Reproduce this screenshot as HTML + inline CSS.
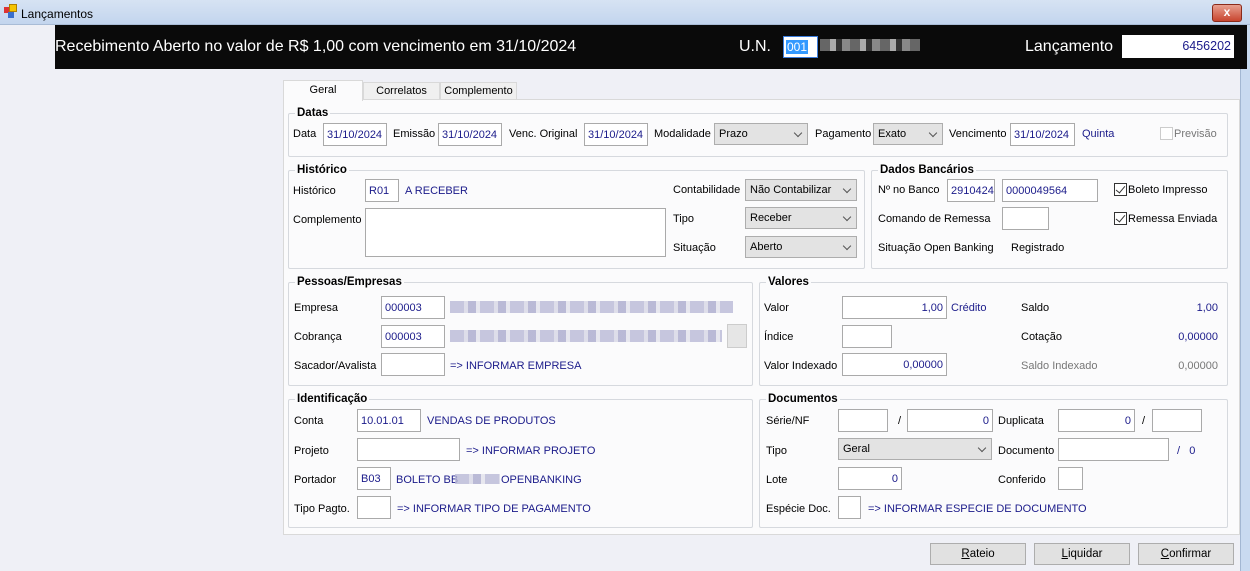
<!DOCTYPE html>
<html><head><meta charset="utf-8"><style>
*{box-sizing:border-box;margin:0;padding:0}
body{width:1250px;height:571px;overflow:hidden;background:#eff0f6;font-family:"Liberation Sans",sans-serif;font-size:11px;color:#000;position:relative}
div,span{position:absolute}
.tb{left:0;top:0;width:1250px;height:25px;background:linear-gradient(#d6e3f3,#c3d5ee);border-bottom:1px solid #a9bcd6}
.ban{left:55px;top:25px;width:1192px;height:44px;background:#0a0a0a;color:#fff;font-size:16px}
.l{white-space:nowrap;line-height:14px}
.b{color:#1b1b8a}
.gr{color:#777}
.i{background:#fff;border:1px solid #aaa;height:23px;color:#1b1b8a;line-height:23px;padding:0 3px;white-space:nowrap}
.r{text-align:right}
.c{background:#e3e3e3;border:1px solid #adadad;height:22px;line-height:21px;padding:0 4px}
.c:after{content:"";position:absolute;right:6px;top:6px;width:5px;height:5px;border-right:1px solid #555;border-bottom:1px solid #555;transform:rotate(45deg)}
.g{border:1px solid #d6d9de;border-radius:2px}
.gt{font-weight:bold;background:#fbfbfc;padding:0 2px;line-height:13px;font-size:11.5px}
.cb{width:13px;height:13px;border:1px solid #333;background:#fff}
.cb:after{content:"";position:absolute;left:3px;top:0px;width:4px;height:8px;border-right:1.5px solid #333;border-bottom:1.5px solid #333;transform:rotate(40deg)}
.btn{background:#e1e1e1;border:1px solid #adadad;height:22px;line-height:21px;text-align:center;font-size:11.5px}
.blur{height:12px;background:repeating-linear-gradient(90deg,#b9b9d6 0 14px,#d6d6e6 14px 18px,#a9a9cc 18px 26px,#e2e2ec 26px 30px);opacity:.8}
</style></head><body>
<div class="tb"><span style="left:4px;top:7px;width:6px;height:6px;background:#d33"></span><span style="left:9px;top:4px;width:8px;height:8px;background:#f5c400;border:1px solid #b08000"></span><span style="left:8px;top:12px;width:6px;height:6px;background:#3a6fcc"></span><span class="l" style="left:21px;top:7px;font-size:12px">Lançamentos</span>
<span style="left:1212px;top:4px;width:30px;height:18px;background:linear-gradient(#e8a090,#c8452f);border:1px solid #8a2a1a;border-radius:3px;color:#fff;font-weight:bold;text-align:center;line-height:15px;font-size:12px">x</span></div>
<div style="left:1240px;top:25px;width:10px;height:546px;background:#c9daf0;border-left:1px solid #a3b7d2"></div>
<div class="ban"><span class="l" style="left:0;top:15px">Recebimento Aberto no valor de R$ 1,00 com vencimento em 31/10/2024</span>
<span class="l" style="left:684px;top:15px">U.N.</span>
<span style="left:728px;top:11px;width:35px;height:22px;background:#fff;border:1px solid #3b7ddd;color:#fff;font-size:12px"><span style="left:2px;top:3px;background:#3399ff;padding:0 1px;line-height:14px">001</span></span>
<span style="left:765px;top:14px;width:100px;height:12px;background:repeating-linear-gradient(90deg,#666 0 10px,#aaa 10px 16px,#333 16px 22px,#888 22px 30px)"></span>
<span class="l" style="left:970px;top:15px">Lançamento</span>
<span style="left:1067px;top:10px;width:112px;height:23px;background:#fff;color:#1b1b8a;font-size:12.5px;text-align:right;line-height:23px;padding-right:3px">6456202</span></div>

<div style="left:283px;top:99px;width:957px;height:436px;background:#fbfbfc;border:1px solid #d9d9d9"></div>
<div style="left:283px;top:80px;width:80px;height:21px;background:#fbfbfc;border:1px solid #d9d9d9;border-bottom:none;text-align:center;line-height:18px">Geral</div>
<div style="left:363px;top:82px;width:77px;height:18px;background:#f0f0f0;border:1px solid #d9d9d9;text-align:center;line-height:17px">Correlatos</div>
<div style="left:440px;top:82px;width:77px;height:18px;background:#f0f0f0;border:1px solid #d9d9d9;text-align:center;line-height:17px">Complemento</div>

<!-- Datas -->
<div class="g" style="left:288px;top:113px;width:940px;height:44px"></div>
<span class="gt" style="left:295px;top:107px">Datas</span>
<span class="l" style="left:293px;top:127px">Data</span><div class="i" style="left:323px;top:123px;width:64px">31/10/2024</div>
<span class="l" style="left:393px;top:127px">Emissão</span><div class="i" style="left:438px;top:123px;width:64px">31/10/2024</div>
<span class="l" style="left:509px;top:127px">Venc. Original</span><div class="i" style="left:584px;top:123px;width:64px">31/10/2024</div>
<span class="l" style="left:654px;top:127px">Modalidade</span><div class="c" style="left:714px;top:123px;width:94px">Prazo</div>
<span class="l" style="left:815px;top:127px">Pagamento</span><div class="c" style="left:873px;top:123px;width:70px">Exato</div>
<span class="l" style="left:949px;top:127px">Vencimento</span><div class="i" style="left:1010px;top:123px;width:65px">31/10/2024</div>
<span class="l b" style="left:1082px;top:127px">Quinta</span>
<span style="left:1160px;top:127px;width:13px;height:13px;border:1px solid #ccc;background:#fff"></span><span class="l gr" style="left:1174px;top:127px">Previsão</span>

<!-- Historico -->
<div class="g" style="left:288px;top:170px;width:577px;height:99px"></div>
<span class="gt" style="left:295px;top:164px">Histórico</span>
<span class="l" style="left:293px;top:184px">Histórico</span><div class="i" style="left:365px;top:179px;width:34px">R01</div><span class="l b" style="left:405px;top:184px">A RECEBER</span>
<span class="l" style="left:293px;top:213px">Complemento</span><div class="i" style="left:365px;top:208px;width:301px;height:49px"></div>
<span class="l" style="left:673px;top:183px">Contabilidade</span><div class="c" style="left:745px;top:179px;width:112px">Não Contabilizar</div>
<span class="l" style="left:673px;top:212px">Tipo</span><div class="c" style="left:745px;top:207px;width:112px">Receber</div>
<span class="l" style="left:673px;top:241px">Situação</span><div class="c" style="left:745px;top:236px;width:112px">Aberto</div>

<!-- Dados Bancarios -->
<div class="g" style="left:871px;top:170px;width:357px;height:99px"></div>
<span class="gt" style="left:878px;top:164px">Dados Bancários</span>
<span class="l" style="left:878px;top:183px">Nº no Banco</span><div class="i" style="left:947px;top:179px;width:48px">2910424</div><div class="i" style="left:1002px;top:179px;width:96px">0000049564</div>
<span class="cb" style="left:1114px;top:183px"></span><span class="l" style="left:1128px;top:183px">Boleto Impresso</span>
<span class="l" style="left:878px;top:212px">Comando de Remessa</span><div class="i" style="left:1002px;top:207px;width:47px"></div>
<span class="cb" style="left:1114px;top:212px"></span><span class="l" style="left:1128px;top:212px">Remessa Enviada</span>
<span class="l" style="left:878px;top:241px">Situação Open Banking</span><span class="l" style="left:1011px;top:241px">Registrado</span>

<!-- Pessoas -->
<div class="g" style="left:288px;top:282px;width:465px;height:104px"></div>
<span class="gt" style="left:295px;top:276px">Pessoas/Empresas</span>
<span class="l" style="left:294px;top:301px">Empresa</span><div class="i" style="left:381px;top:296px;width:64px">000003</div><div class="blur" style="left:450px;top:301px;width:283px"></div>
<span class="l" style="left:294px;top:330px">Cobrança</span><div class="i" style="left:381px;top:325px;width:64px">000003</div><div class="blur" style="left:450px;top:330px;width:272px"></div>
<span style="left:727px;top:324px;width:20px;height:24px;background:#e6e6e6;border:1px solid #ccc"></span>
<span class="l" style="left:294px;top:359px">Sacador/Avalista</span><div class="i" style="left:381px;top:353px;width:64px"></div><span class="l b" style="left:450px;top:359px">=&gt; INFORMAR EMPRESA</span>

<!-- Valores -->
<div class="g" style="left:759px;top:282px;width:469px;height:104px"></div>
<span class="gt" style="left:766px;top:276px">Valores</span>
<span class="l" style="left:764px;top:301px">Valor</span><div class="i r" style="left:842px;top:296px;width:105px">1,00</div><span class="l b" style="left:951px;top:301px">Crédito</span>
<span class="l" style="left:1021px;top:301px">Saldo</span><span class="l b" style="left:1150px;top:301px;width:68px;text-align:right">1,00</span>
<span class="l" style="left:764px;top:330px">Índice</span><div class="i" style="left:842px;top:325px;width:50px"></div>
<span class="l" style="left:1021px;top:330px">Cotação</span><span class="l b" style="left:1150px;top:330px;width:68px;text-align:right">0,00000</span>
<span class="l" style="left:764px;top:359px">Valor Indexado</span><div class="i r" style="left:842px;top:353px;width:105px">0,00000</div>
<span class="l gr" style="left:1021px;top:359px">Saldo Indexado</span><span class="l gr" style="left:1150px;top:359px;width:68px;text-align:right">0,00000</span>

<!-- Identificacao -->
<div class="g" style="left:288px;top:399px;width:465px;height:129px"></div>
<span class="gt" style="left:295px;top:393px">Identificação</span>
<span class="l" style="left:294px;top:414px">Conta</span><div class="i" style="left:357px;top:409px;width:64px">10.01.01</div><span class="l b" style="left:427px;top:414px">VENDAS DE PRODUTOS</span>
<span class="l" style="left:294px;top:444px">Projeto</span><div class="i" style="left:357px;top:438px;width:103px"></div><span class="l b" style="left:466px;top:444px">=&gt; INFORMAR PROJETO</span>
<span class="l" style="left:294px;top:473px">Portador</span><div class="i" style="left:357px;top:467px;width:34px">B03</div><span class="l b" style="left:396px;top:473px">BOLETO BB</span><div class="blur" style="left:455px;top:474px;width:45px;height:10px"></div><span class="l b" style="left:501px;top:473px">OPENBANKING</span>
<span class="l" style="left:294px;top:502px">Tipo Pagto.</span><div class="i" style="left:357px;top:496px;width:34px"></div><span class="l b" style="left:397px;top:502px">=&gt; INFORMAR TIPO DE PAGAMENTO</span>

<!-- Documentos -->
<div class="g" style="left:759px;top:399px;width:469px;height:129px"></div>
<span class="gt" style="left:766px;top:393px">Documentos</span>
<span class="l" style="left:766px;top:414px">Série/NF</span><div class="i" style="left:838px;top:409px;width:50px"></div><span class="l" style="left:898px;top:414px">/</span><div class="i r" style="left:907px;top:409px;width:86px">0</div>
<span class="l" style="left:998px;top:414px">Duplicata</span><div class="i r" style="left:1058px;top:409px;width:77px">0</div><span class="l" style="left:1142px;top:414px">/</span><div class="i" style="left:1152px;top:409px;width:50px"></div>
<span class="l" style="left:766px;top:444px">Tipo</span><div class="c" style="left:838px;top:438px;width:154px">Geral</div>
<span class="l" style="left:998px;top:444px">Documento</span><div class="i" style="left:1058px;top:438px;width:111px"></div><span class="l b" style="left:1177px;top:444px">/&nbsp;&nbsp; 0</span>
<span class="l" style="left:766px;top:473px">Lote</span><div class="i r" style="left:838px;top:467px;width:64px">0</div>
<span class="l" style="left:998px;top:473px">Conferido</span><div class="i" style="left:1058px;top:467px;width:25px"></div>
<span class="l" style="left:766px;top:502px">Espécie Doc.</span><div class="i" style="left:838px;top:496px;width:23px"></div><span class="l b" style="left:868px;top:502px">=&gt; INFORMAR ESPECIE DE DOCUMENTO</span>

<div class="btn" style="left:930px;top:543px;width:96px"><u>R</u>ateio</div>
<div class="btn" style="left:1034px;top:543px;width:96px"><u>L</u>iquidar</div>
<div class="btn" style="left:1138px;top:543px;width:96px"><u>C</u>onfirmar</div>
</body></html>
